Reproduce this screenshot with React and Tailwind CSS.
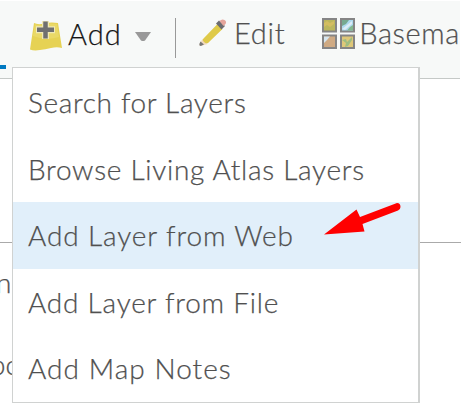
const items = [
  { label: 'Search for Layers', spacing: 'tracking-[0.66px] pb-0' },
  { label: 'Browse Living Atlas Layers', spacing: 'tracking-[0.72px] pb-0' },
  { label: 'Add Layer from Web', spacing: 'tracking-[0.88px] pb-[2px]', active: true },
  { label: 'Add Layer from File', spacing: 'tracking-[0.78px] pb-[2px]' },
  { label: 'Add Map Notes', spacing: 'tracking-[1.05px] pb-[2px]' },
];

function AddIcon() {
  return (
    <svg className="h-[30px] w-[32px] shrink-0" viewBox="0 0 32 30">
      <path d="M4 2Q8 4 14 2.5T28 2L32 27Q27 25.500 21 27T10 29Q4 30 0 28.500Z" fill="#e6d254" />
      <path d="M5 3Q9 5 14 3.500T27 3L29 16Q16 20 3 15Z" fill="#ead967" />
      <path d="M15.500 0V18M6 8.700H25" stroke="#f0e9b5" strokeWidth="7" />
      <path d="M15.500 .5V17.500M7 8.700H24" stroke="#707070" strokeWidth="4.500" />
    </svg>
  );
}

function PencilIcon() {
  return (
    <svg className="h-[28px] w-[28px] shrink-0" viewBox="0 0 28 28">
      <path d="M3.500 20L8.500 25L1.500 27Q0 27 .5 25Z" fill="#f1d9bd" />
      <path d="M1.500 22.500L5 25.500L1.800 27Q.1 27 .4 25Z" fill="#777" />
      <path d="M18.500 5L23.500 10L9 24Q7 25 5 23T4.500 19.500Z" fill="#dfca49" />
      <path d="M17 4.500L20 1.500L26 7L22.500 10.500Z" fill="#6c6c70" />
      <path d="M20.500 2Q23-.5 25.500 1T26.500 5L24.500 7Z" fill="#e5a59b" />
    </svg>
  );
}

function BasemapIcon() {
  return (
    <svg className="h-[31px] w-[33px] shrink-0" viewBox="0 0 33 31">
      <g stroke="#858585" strokeWidth="2">
        <rect x="1" y="1" width="13" height="12.500" fill="#bbb65c" />
        <rect x="19" y="1" width="13" height="12.500" fill="#acd9ee" />
        <rect x="1" y="17.500" width="13" height="12.500" fill="#cfaa83" />
        <rect x="19" y="17.500" width="13" height="12.500" fill="#dfc879" />
      </g>
      <path d="M2 5L5 3L8 5L12 3V6L8 9L5 7L2 9Z" fill="#d3bd60" />
      <path d="M20 2H27L24 6L20 8Z" fill="#76aa91" />
      <path d="M31 7V12.500H25L28 9Z" fill="#83b88e" />
      <path d="M20 11L30 3V6L23 12Z" fill="#ddedf6" />
      <path d="M2 18.500H8L5 22L2 25Z" fill="#d6e6ef" />
      <path d="M20 22L24 21L25 24L30 19V22L26 28L23 29L24 25Z" fill="#9fbd81" />
    </svg>
  );
}

export default function App() {
  return (
    <div className="relative flex h-[407px] w-[461px] flex-col overflow-hidden bg-white font-['Lato',sans-serif] text-[28px] font-light text-[#505050] [-webkit-text-stroke:0.25px]">
      <header className="mr-px flex h-[79px] shrink-0 items-start overflow-hidden border-b border-t border-b-[#c5c9c7] border-t-white bg-[#f7f9f8] pl-[30px] text-[29px]">
        <div className="mt-[19px] flex h-[31px] items-center">
          <AddIcon />
          <span className="-mt-[4px] ml-[6px] w-[57px] tracking-[1.1px] text-[#151515]">Add</span>
          <svg className="ml-[10px] mt-[2px] h-[10px] w-[16px]" viewBox="0 0 16 10">
            <path d="M0 0H16L10 8.500Q8 9.500 6 8.500Z" fill="#999" />
          </svg>
        </div>
        <div className="ml-[24px] mt-[17px] h-[40px] w-px bg-[#999]" />
        <div className="ml-[23px] mt-[17px] flex h-[30px] items-center">
          <PencilIcon />
          <span className="-mt-px ml-[7px] tracking-[0.7px]">Edit</span>
        </div>
        <div className="ml-[37px] mt-[17px] flex h-[31px] w-[137px] shrink-0 items-center">
          <BasemapIcon />
          <span className="-mt-px ml-[4px] whitespace-nowrap tracking-[0.6px]">Basema</span>
        </div>
      </header>

      <main className="flex min-h-0 flex-1 flex-col">
        <div className="h-[164px] shrink-0 border-b border-[#aaa]" />
        <div className="flex h-[77px] items-center">
          <span className="-ml-[4px]">n</span>
        </div>
        <div className="flex h-[87px] items-center">
          <span className="-ml-[10px]">po</span>
        </div>
      </main>

      <div className="absolute left-0 top-[65px] h-[4px] w-[6px] bg-[#0079c1]" />

      <div className="absolute left-[12px] top-[67px] flex h-[336px] w-[408px] flex-col border border-r-2 border-[#d0d2d1] bg-white">
        {items.map(({ label, spacing, active }) => (
          <div key={label} className={`flex h-[67px] shrink-0 items-center whitespace-nowrap pl-[15px] ${spacing} ${active ? 'bg-[#e1effa]' : 'last:h-[66px]'}`}>
            {label}
          </div>
        ))}
      </div>

      <svg className="absolute left-[322px] top-[200px] h-[38px] w-[82px]" viewBox="0 0 82 38">
        <path d="M2 34.500L34.500 9.500L38 17L75 3Q78.500 3 78.500 7Q78.500 9 76 10.500L40.500 24L42.500 31.500Z" fill="#f00" />
      </svg>
    </div>
  );
}
